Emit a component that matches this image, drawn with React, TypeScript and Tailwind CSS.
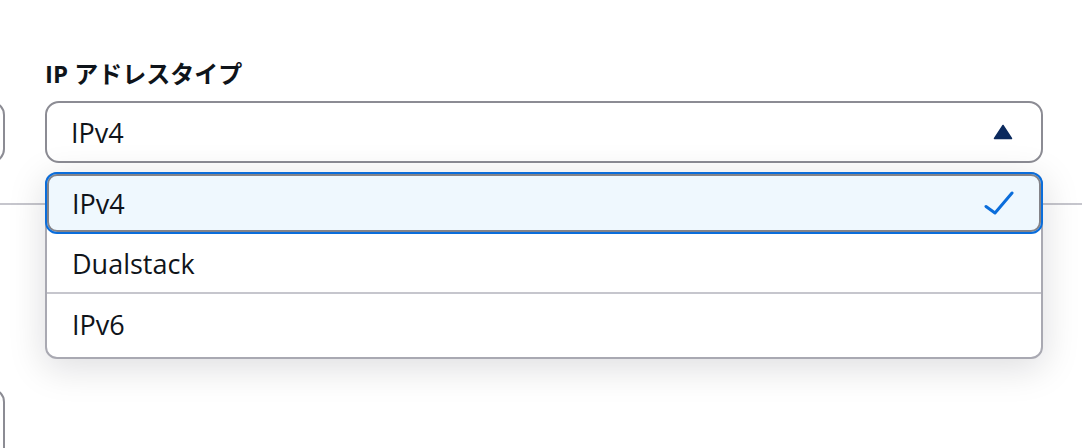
import { useState } from 'react';

const options = ['IPv4', 'Dualstack', 'IPv6'];

function CaretUp() {
  return (
    <svg width="20" height="16" viewBox="0 0 20 16" className="shrink-0">
      <path
        d="M10 1.5 L18.5 14.5 L1.5 14.5 Z"
        fill="#0b2a5e"
        stroke="#0b2a5e"
        strokeWidth="1.5"
        strokeLinejoin="round"
      />
    </svg>
  );
}

function Check() {
  return (
    <svg width="30" height="24" viewBox="0 0 30 24" className="shrink-0">
      <path
        d="M2 15.5 L11 22 L28 2"
        fill="none"
        stroke="#0a6ddb"
        strokeWidth="3"
        strokeLinecap="round"
        strokeLinejoin="round"
      />
    </svg>
  );
}

// left neighbour column: only the right edge of its inputs shows
function ClippedBox({ height }: { height: string }) {
  return (
    <div className="flex w-[5px] justify-end overflow-hidden">
      <div className={`${height} w-[200px] shrink-0 rounded-[14px] border-2 border-[#8c8c94]`} />
    </div>
  );
}

export default function App() {
  const [selected] = useState('IPv4');

  return (
    <div className="relative h-[448px] w-[1082px] overflow-hidden bg-white font-['Open_Sans','Noto_Sans_CJK_JP',sans-serif] text-[#0f141a]">
      <div className="flex gap-[40px] pt-[58px]">
        <div className="pt-[43px]">
          <ClippedBox height="h-[62px]" />
        </div>

        <div className="relative z-10 w-[998px]">
          <label className="block text-[24px] font-bold leading-[32px]">IP アドレスタイプ</label>
          <div className="mt-[11px] flex h-[62px] items-center justify-between rounded-[14px] border-2 border-[#8c8c94] bg-white pl-[24px] pr-[28px]">
            <span className="text-[27px] leading-none">{selected}</span>
            <CaretUp />
          </div>

          <div className="absolute left-0 right-0 top-[calc(100%+9px)] rounded-[12px] border-2 border-[#a9a9b2] bg-white shadow-[0_8px_36px_2px_rgba(0,7,22,0.13)]">
            {options.map((opt, i) =>
              opt === selected ? (
                <div
                  key={opt}
                  className="-mx-[2px] -mt-[2px] flex h-[62px] items-center justify-between rounded-[12px] border-2 border-[#0a6ddb] bg-[#eff8fe] pl-[25px] pr-[27px] shadow-[inset_0_0_0_2px_#838389]"
                >
                  <span className="text-[27px] leading-none">{opt}</span>
                  <Check />
                </div>
              ) : (
                <div
                  key={opt}
                  className={
                    i === options.length - 1
                      ? 'flex h-[65px] items-center border-t-2 border-[#c6c6cd] pb-[2px] pl-[25px]'
                      : 'flex h-[58px] items-center pl-[25px]'
                  }
                >
                  <span className="text-[27px] leading-none">{opt}</span>
                </div>
              )
            )}
          </div>
        </div>
      </div>

      <div className="mt-[40px] border-t-2 border-[#c6c6cd]" />

      <div className="pt-[183px]">
        <ClippedBox height="h-[80px]" />
      </div>
    </div>
  );
}
